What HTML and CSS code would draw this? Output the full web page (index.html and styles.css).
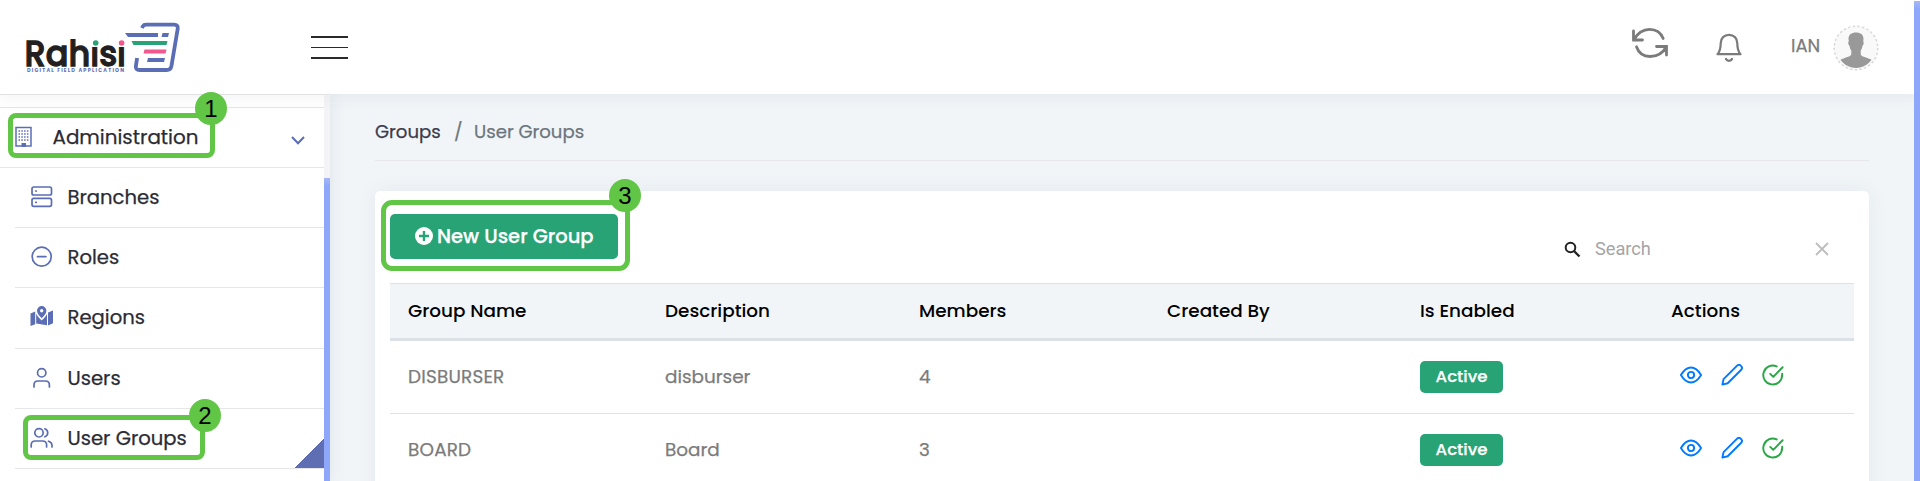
FILE: index.html
```html
<!DOCTYPE html>
<html lang="en">
<head>
<meta charset="utf-8">
<title>User Groups</title>
<link rel="stylesheet" href="styles.css">
</head>
<body>
<svg width="0" height="0" class="defs">
  <defs>
    <g id="eye"><path d="M1 12c3-5 7-8.200 11-8.200s8 3.200 11 8.200c-3 5-7 8.200-11 8.200S4 17 1 12z"/><circle cx="12" cy="12" r="3.400"/></g>
    <g id="pencil"><path d="M1.500 22.500l1.300-6L17.300 2a2.900 2.900 0 0 1 4.500 4.500L7.300 21z"/></g>
    <g id="check"><path d="M22 10.500v1.500a10.300 10.300 0 1 1-6-9.300M22.500 3.500L12.300 14 9 10.800"/></g>
  </defs>
</svg>
<div class="app">
  <header class="topbar">
    <svg class="logo" width="156" height="54" viewBox="0 0 156 54">
      <text class="logo-name" x="-1.500" y="45.700" textLength="101.500" lengthAdjust="spacingAndGlyphs">Rahisi</text>
      <rect x="65" y="16" width="9" height="11" fill="#fff"/><rect x="91" y="16" width="9" height="11" fill="#fff"/>
      <circle cx="69.700" cy="23" r="2.800" fill="#27a376"/><circle cx="95.600" cy="23" r="2.800" fill="#f0588e"/>
      <text class="logo-sub" x="1" y="51.700" textLength="97" lengthAdjust="spacing">DIGITAL FIELD APPLICATION</text>
      <path d="M116 8l.9-1.800q.9-1.500 3.200-1.500h28.200q4 0 3.400 4l-6.200 37q-.7 4.300-5 4.300h-27q-4.200 0-3.600-4l1.200-8" fill="none" stroke="#5a6db5" stroke-width="3.800"/>
      <path d="M99 13h33v4h-30z M136.500 13h6.500l-1 4h-6.500z M122 38h17l-1 4h-17z" fill="#5a6db5"/>
      <path d="M105.500 21h36l-1 4h-33z" fill="#27a376"/>
      <path d="M118.500 29.500h22l-1 4h-22z" fill="#f0588e"/>
    </svg>
    <div class="burger"><i></i><i class="thin"></i><i></i></div>
    <div class="tools">
      <svg class="refresh" width="38" height="32" viewBox="0 0 38 32"><path d="M2.500 4v9h9M2.500 13C6 7 12 2.300 18.500 2.300c6.500 0 11.500 3.500 13.700 9.200M35.500 28v-8.500h-10M35.500 19.500C32 26 25.500 29.500 19 29.500c-6.500 0-11.500-3.800-13.500-9.700" /></svg>
      <svg class="bell" width="26" height="30" viewBox="0 0 26 30"><path d="M1.500 21.200c2.800-3.200 3.200-6 3.200-11 0-5 3.500-8.400 8.300-8.400s8.300 3.400 8.300 8.400c0 5 .4 7.800 3.200 11zM10 26c1 2.400 5 2.400 6 0"/></svg>
      <span class="who">IAN</span>
      <svg class="avatar" width="46" height="46" viewBox="0 0 46 46">
        <circle cx="23" cy="23" r="21.800" fill="#f9f9f9" stroke="#d9d9d9" stroke-width="1.500" stroke-dasharray="2.500 2.200"/>
        <path d="M15.500 14c0-4.500 3-6.600 7.500-6.600s7.500 2.100 7.500 6.600l-.3 2.500c.9.300.6 3.600-.7 4.200-.3 2.300-.8 3.500-1.800 4.700v4c1.500 2.800 7 3 10.800 5.400C35 39.500 30 43 23 43S11 39.500 7.500 34.800c3.800-2.400 9.300-2.600 10.800-5.400v-4c-1-1.200-1.500-2.400-1.800-4.700-1.300-.6-1.600-3.900-.7-4.200z" fill="#999"/>
      </svg>
    </div>
  </header>
  <div class="body">
    <aside class="sidebar">
      <nav class="menu">
        <div class="spacer"></div>
        <div class="item parent">
          <svg width="17" height="22" viewBox="0 0 17 22"><path d="M1 1.500h15v18.500H1z" fill="none" stroke="#5a6db5" stroke-width="1.500"/><path d="M3.500 5h10M3.500 8h10M3.500 11h10M3.500 14h10" stroke="#5a6db5" stroke-width="1.500" stroke-dasharray="1.500 1.300"/><path d="M6.500 17h4.500v4H6.500z" fill="#5a6db5"/></svg>
          <span>Administration</span>
          <svg class="chev" width="14" height="9" viewBox="0 0 14 9"><path d="M1 1l6 6.200L13 1"/></svg>
        </div>
        <div class="item"><svg class="ic" width="24" height="24" viewBox="0 0 24 24"><rect x="2" y="2" width="19.500" height="8" rx="1.800"/><rect x="2" y="13.300" width="19.500" height="8" rx="1.800"/><path d="M5.700 6h.6M5.700 17.300h.6"/></svg><span>Branches</span></div>
        <div class="item"><svg class="ic" width="24" height="24" viewBox="0 0 24 24"><circle cx="11.700" cy="11.700" r="9.500"/><path d="M7.500 11.700h8.400"/></svg><span>Roles</span></div>
        <div class="item tall"><svg class="ic solid" width="24" height="24" viewBox="0 0 24 24"><path d="M.5 8.500l4.700-2v12.700L.5 21zM18 7.500l5-2v12.800l-5 2.200zM6.200 8.500c1 2.800 3.500 5 5.500 7 2-2 4.200-4 5.300-6.600v11.400L6.200 18.600z"/><path fill-rule="evenodd" d="M11.700 1a4.700 4.700 0 0 1 4.700 4.700c0 2.500-2.600 5.300-4.700 7.600C9.600 11 7 8.200 7 5.700A4.700 4.700 0 0 1 11.700 1zm0 3a1.700 1.700 0 1 0 0 3.400 1.700 1.700 0 0 0 0-3.400z"/></svg><span>Regions</span></div>
        <div class="item"><svg class="ic" width="24" height="24" viewBox="0 0 24 24"><circle cx="11.700" cy="6.800" r="4.200"/><path d="M4 21v-2c0-2.500 1.700-4 4-4h7.400c2.300 0 4 1.500 4 4v2"/></svg><span>Users</span></div>
        <div class="item active"><svg class="ic" width="24" height="24" viewBox="0 0 24 24"><circle cx="9" cy="6.800" r="4.200"/><path d="M1.200 21v-2c0-2.500 1.700-4 4-4h7.400c2.300 0 4 1.500 4 4v2M14.800 2.800a4.200 4.200 0 0 1 0 8M18.500 15.200c2 .6 3.500 2 3.500 4V21"/></svg><span>User Groups</span></div>
      </nav>
      <div class="track"><div class="thumb"></div></div>
    </aside>
    <main class="main">
      <div class="crumbs"><span class="c1">Groups</span><span class="c2">/</span><span>User Groups</span></div>
      <section class="card">
        <div class="bar">
          <button class="new"><svg width="18" height="18" viewBox="0 0 18 18"><circle cx="9" cy="9" r="9" fill="#fff"/><path d="M9 4v10M4 9h10" stroke="#27a376" stroke-width="2.400"/></svg><span>New User Group</span></button>
          <div class="search">
            <svg width="17" height="17" viewBox="0 0 17 17"><circle cx="6.500" cy="6.500" r="4.800" fill="none" stroke="#222" stroke-width="2"/><path d="M10 10l5.500 5.500" stroke="#222" stroke-width="2.300"/></svg>
            <span>Search</span>
            <svg class="x" width="14" height="14" viewBox="0 0 14 14"><path d="M1 1l12 12M13 1L1 13" stroke="#bdbdbd" stroke-width="1.800"/></svg>
          </div>
        </div>
        <div class="table">
          <div class="row head"><span>Group Name</span><span>Description</span><span>Members</span><span>Created By</span><span>Is Enabled</span><span>Actions</span></div>
          <div class="row"><span class="code">DISBURSER</span><span>disburser</span><span>4</span><span></span><span><b class="badge">Active</b></span><span class="acts"><svg viewBox="0 0 24 24"><use href="#eye"/></svg><svg viewBox="0 0 24 24"><use href="#pencil"/></svg><svg class="ok" viewBox="0 0 24 24"><use href="#check"/></svg></span></div>
          <div class="row"><span class="code">BOARD</span><span>Board</span><span>3</span><span></span><span><b class="badge">Active</b></span><span class="acts"><svg viewBox="0 0 24 24"><use href="#eye"/></svg><svg viewBox="0 0 24 24"><use href="#pencil"/></svg><svg class="ok" viewBox="0 0 24 24"><use href="#check"/></svg></span></div>
        </div>
      </section>
    </main>
  </div>
  <div class="page-scroll"></div>
  <div class="mark m1"><b>1</b></div>
  <div class="mark m2"><b>2</b></div>
  <div class="mark m3"><b>3</b></div>
</div>
</body>
</html>
```

FILE: styles.css
```css
* { box-sizing: border-box; }
body { margin: 0; font-family: Poppins, Inter, "Liberation Sans", sans-serif; color: #2b2b33; }
.defs { position: absolute; }
.app { position: relative; width: 1920px; height: 481px; overflow: hidden; background: #f1f5f8; display: flex; flex-direction: column; }
span { white-space: nowrap; -webkit-text-stroke: .25px currentColor; }

.topbar { position: relative; z-index: 2; height: 94px; flex: none; background: #fff; display: flex; align-items: flex-start; padding-left: 26px; box-shadow: 0 2px 16px rgba(60, 80, 100, .08); }
.logo { margin-top: 20px; overflow: visible; }
.logo-name { font-family: Poppins, Inter, sans-serif; font-weight: 500; font-size: 36px; fill: #231f20; stroke: #231f20; stroke-width: 1.300; }
.logo-sub { font: 700 5px Poppins, Inter, sans-serif; fill: #5a6db5; }
.burger { margin: 36px 0 0 129px; width: 37px; height: 23px; display: flex; flex-direction: column; justify-content: space-between; }
.burger i { height: 2px; background: #2a2a2a; }
.burger .thin { height: 1px; }
.tools { margin-left: auto; padding: 25px 41px 0 0; display: flex; align-items: flex-start; }
.refresh, .bell { fill: none; stroke: #7b7b7b; stroke-width: 2.800; stroke-linecap: round; stroke-linejoin: miter; }
.refresh { margin: 2px 47px 0 0; }
.bell { margin: 8px 49px 0 0; stroke-width: 2.200; stroke-linejoin: round; }
.who { width: 42px; margin-top: 9px; font-size: 18px; line-height: 24px; color: #7b7b7b; }

.body { flex: 1; display: flex; min-height: 0; }
.sidebar { width: 330px; flex: none; background: #fff; display: flex; border-top: 1px solid #e8e8e8; box-shadow: 0 0 16px rgba(60, 80, 100, .10); position: relative; z-index: 1; }
.menu { width: 324px; }
.track { width: 6px; background: #f4f4f6; padding-top: 83px; border-radius: 3px 3px 0 0; }
.thumb { height: 310px; background: linear-gradient(#a5b7f5, #8ea7fa 8px); }
.spacer { height: 13px; border-bottom: 1px solid #e6e6e6; }
.item { height: 60px; margin-left: 15px; padding: 0 0 1px 14.500px; border-bottom: 1px solid #e6e6e6; display: flex; align-items: center; font-size: 19.600px; gap: 14px; }
.item.parent { margin-left: 0; font-size: 19.900px; }
.parent svg:first-child { margin-right: 7px; }
.tall { height: 61px; padding-bottom: 3px; }
.item.active { background: linear-gradient(135deg, transparent 50%, #5f6eb3 50%) right bottom / 29px 29px no-repeat; }
.ic { fill: none; stroke: #5a6db5; stroke-width: 1.700; stroke-linecap: round; }
.solid { fill: #5a6db5; stroke: none; }
.chev { margin: 6px 19px 0 auto; fill: none; stroke: #5a6db5; stroke-width: 2; }

.main { flex: 1; padding: 0 51px 0 45px; }
.crumbs { height: 67px; padding-top: 24px; border-bottom: 1px solid #e8e8ec; font-size: 18.100px; line-height: 28px; display: flex; color: #6c757d; }
.c1 { width: 79px; color: #3e3a4a; }
.c2 { width: 20px; }
.card { height: 320px; margin-top: 30px; padding: 0 15px; background: #fff; border-radius: 5px; box-shadow: 0 0 20px rgba(60, 80, 100, .07); }
.bar { height: 92px; display: flex; justify-content: space-between; align-items: flex-start; padding-top: 23px; }
.new { width: 228px; height: 45px; border: 0; border-radius: 5px; background: #27a376; color: #fff; display: flex; align-items: center; gap: 4px; padding: 0 0 1px 25px; font: 500 19.500px Poppins, Inter, sans-serif; }
.search { display: flex; align-items: center; width: 290px; height: 24px; margin-top: 23px; font: 18.200px Roboto, sans-serif; color: #a5a5a5; }
.search span { margin: -1px 0 0 14px; -webkit-text-stroke: 0; }
.search .x { margin: 0 25px 0 auto; }
.table { display: flex; flex-direction: column; }
.row { display: grid; grid-template-columns: 257px 254px 248px 253px 251px 1fr; height: 73px; padding: 0 0 2px 18px; align-items: center; font-size: 18.400px; color: #7b7b7b; border-bottom: 1px solid #dee2e6; }
.code { letter-spacing: .2px; }
.head { height: 58px; background: #f1f5f8; border-top: 1px solid #dee2e6; border-bottom: 3px solid #dce1e7; color: #000; font-weight: 500; }
.head span { -webkit-text-stroke: 0; }
.badge { display: flex; align-items: center; justify-content: center; width: 83px; height: 32px; margin-top: 2px; border-radius: 5px; background: #27a376; color: #fff; font-size: 16.600px; font-weight: 500; padding-bottom: 1px; }
.acts { display: flex; gap: 19px; padding-left: 9px; }
.acts svg { width: 22px; height: 22px; margin-top: -3px; fill: none; stroke: #007bff; stroke-width: 2.100; stroke-linecap: round; stroke-linejoin: round; }
.acts .ok { stroke: #28a745; }

.page-scroll { position: absolute; z-index: 3; right: 0; top: 1px; width: 6px; height: 480px; background: linear-gradient(#a5b7f5, #8ea7fa 8px); }
.mark { position: absolute; z-index: 4; border: 5px solid #61c546; border-radius: 8px; }
.mark b { position: absolute; top: -26px; right: -17px; width: 32px; height: 33px; border-radius: 50%; background: #61c546; color: #000; font: 24px/34px "Liberation Sans", sans-serif; text-align: center; }
.m1 { left: 8px; top: 113px; width: 207px; height: 45px; }
.m2 { left: 23px; top: 415px; width: 182px; height: 45px; }
.m2 b { top: -21px; right: -21px; }
.m3 { left: 381px; top: 200px; width: 249px; height: 71px; border-radius: 11px; }
.m3 b { right: -16px; }
```
